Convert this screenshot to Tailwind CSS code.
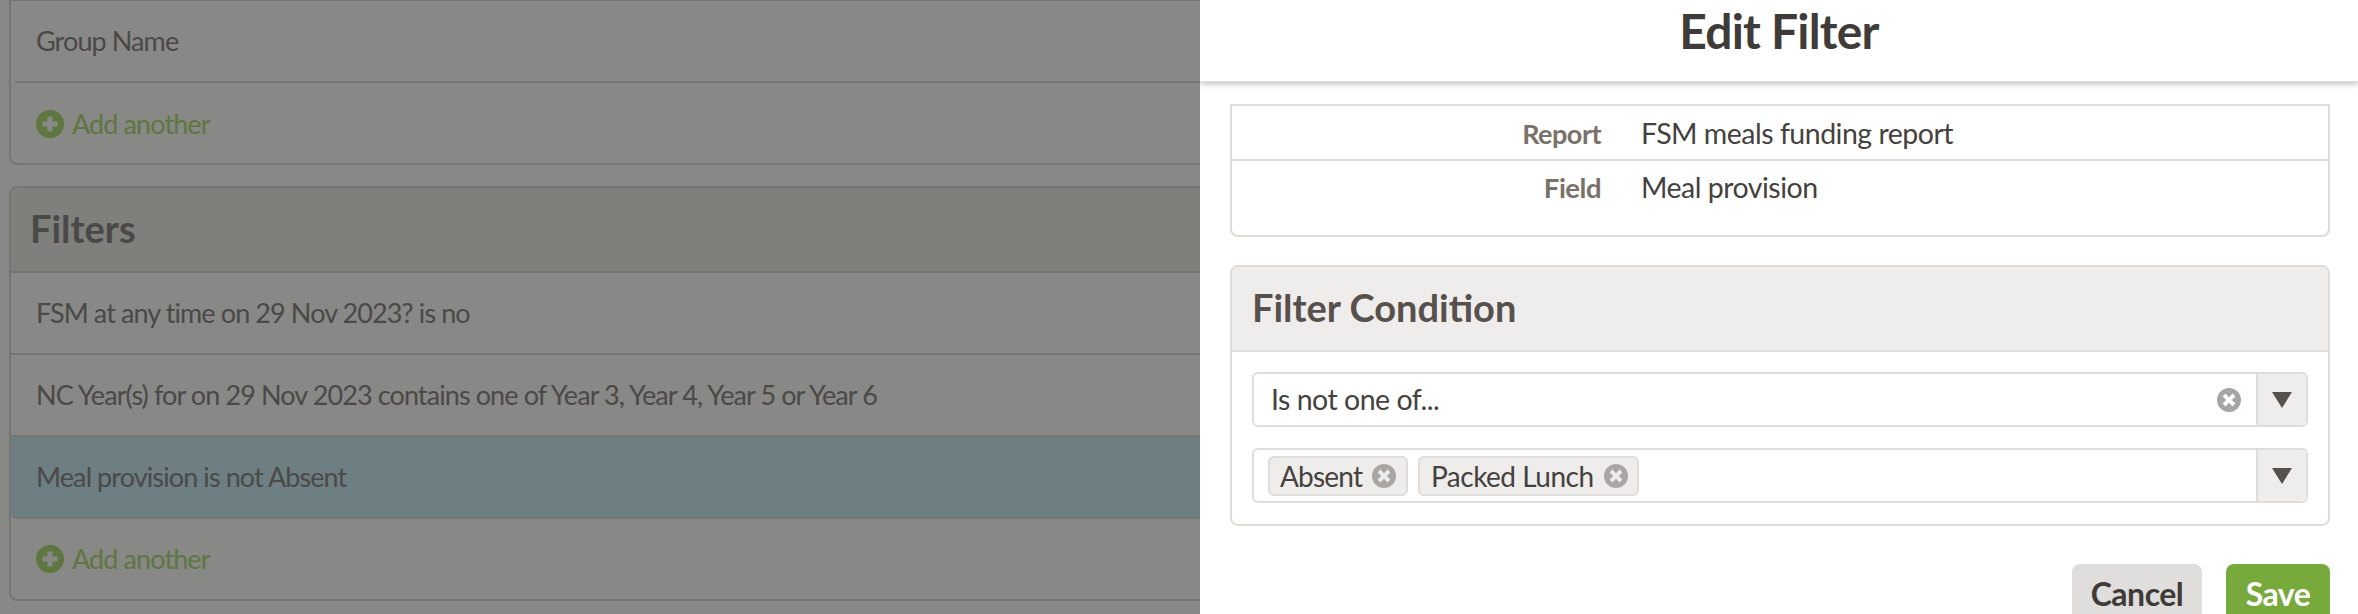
<!doctype html>
<html><head><meta charset="utf-8"><script src="https://cdn.jsdelivr.net/npm/@tailwindcss/browser@4"></script></head>
<body class="m-0 overflow-hidden">
<div class="flex w-[2358px] h-[614px] overflow-hidden font-['Lato',sans-serif] text-[27px] text-[#4b4947] bg-[#888886]">
  <div class="w-[1200px] shrink-0 pl-[9px] overflow-hidden">
    <div class="w-[1300px] tracking-[-0.9px]">
      <section class="h-[166px] border-2 border-[#757573] rounded-b-[8px] bg-[#888886] -mt-px">
        <div class="h-[82px] ml-[4px] border-b-2 border-[#757573] pl-[21px] flex items-center">Group Name</div>
        <div class="h-[82px] pl-[25px] flex items-center gap-[8px] text-[#5e7640]">
          <svg class="w-[28px] h-[28px]" viewBox="0 0 28 28"><path fill="#5e7640" fill-rule="evenodd" d="M14 0a14 14 0 1 0 0 28a14 14 0 1 0 0-28ZM11.5 6.5h5v5h5v5h-5v5h-5v-5h-5v-5h5Z"/></svg>
          Add another</div>
      </section>
      <section class="mt-[21px] h-[415px] border-2 border-[#757573] rounded-[8px] bg-[#888886]">
        <div class="h-[85px] bg-[#7f7f7c] rounded-t-[6px] border-b-2 border-[#757573] pl-[19px] pb-[2px] flex items-center text-[38px] font-bold tracking-[0px]">Filters</div>
        <div class="h-[82px] border-b-2 border-[#757573] pl-[25px] flex items-center">FSM at any time on 29 Nov 2023? is no</div>
        <div class="h-[82px] border-b-2 border-[#757573] pl-[25px] flex items-center">NC Year(s) for on 29 Nov 2023 contains one of Year 3, Year 4, Year 5 or Year 6</div>
        <div class="h-[82px] border-b-2 border-[#757573] bg-[#6d7f83] pl-[25px] flex items-center rounded-bl-[6px]">Meal provision is not Absent</div>
        <div class="h-[80px] pl-[25px] flex items-center gap-[8px] text-[#5e7640]">
          <svg class="w-[28px] h-[28px]" viewBox="0 0 28 28"><path fill="#5e7640" fill-rule="evenodd" d="M14 0a14 14 0 1 0 0 28a14 14 0 1 0 0-28ZM11.5 6.5h5v5h5v5h-5v5h-5v-5h-5v-5h5Z"/></svg>
          Add another</div>
      </section>
    </div>
  </div>
  <aside class="w-[1158px] shrink-0 bg-white text-[#45413e] text-[28.5px] tracking-[-0.5px] overflow-hidden">
    <header class="h-[82px] flex items-start justify-center pt-[2px] text-[48px] leading-[58px] font-bold text-[#3f3b38] shadow-[0_2px_6px_rgba(0,0,0,0.25)] border-b border-[#dddddb] tracking-[-0.8px] relative">Edit Filter</header>
    <div class="pl-[30px] pr-[28px]">
      <div class="mt-[22px] h-[133px] border-2 border-[#dedddb] rounded-b-[8px]">
        <div class="h-[55px] border-b-2 border-[#dedddb] flex pt-[9px]">
          <div class="w-[369px] text-right font-bold text-[#7b716b] text-[27px] leading-[38px]">Report</div>
          <div class="ml-[40px] leading-[36px]">FSM meals funding report</div>
        </div>
        <div class="flex pt-[8px]">
          <div class="w-[369px] text-right font-bold text-[#7b716b] text-[27.5px] leading-[38px]">Field</div>
          <div class="ml-[40px] leading-[36px]">Meal provision</div>
        </div>
      </div>
      <div class="mt-[28px] h-[261px] border-2 border-[#dedddb] rounded-[8px]">
        <div class="h-[85px] bg-[#eeedeb] rounded-t-[6px] border-b-2 border-[#dedddb] pl-[20px] pb-[2px] flex items-center text-[38px] font-bold text-[#57514e] tracking-[0px]">Filter Condition</div>
        <div class="px-[20px] pt-[20px]">
          <div class="h-[55px] border-2 border-[#dedddb] rounded-[6px] flex">
            <div class="flex-1 pl-[17px] flex items-center">Is not one of...</div>
            <svg class="w-[24px] h-[24px] self-center mr-[15px]" viewBox="0 0 24 24"><path fill="#a8a5a2" fill-rule="evenodd" d="M12 0a12 12 0 1 0 0 24a12 12 0 1 0 0-24ZM8.4 5.6L12 9.2L15.6 5.6L18.4 8.4L14.8 12L18.4 15.6L15.6 18.4L12 14.8L8.4 18.4L5.6 15.6L9.2 12L5.6 8.4Z"/></svg>
            <div class="w-[50px] bg-[#eeedeb] border-l-2 border-[#dedddb] rounded-r-[5px] flex items-center justify-center">
              <svg class="w-[20px] h-[16px]" viewBox="0 0 20 16"><path fill="#57514e" d="M0 0h20L10 16Z"/></svg>
            </div>
          </div>
          <div class="mt-[21px] h-[55px] border-2 border-[#dedddb] rounded-[6px] flex">
            <div class="flex-1 pl-[14px] flex items-center gap-[10px] text-[28px]">
              <span class="h-[40px] w-[140px] bg-[#eeedeb] border-2 border-[#dedddb] rounded-[6px] flex items-center pl-[10px] tracking-[-0.8px]">Absent<svg class="w-[24px] h-[24px] ml-auto mr-[10px]" viewBox="0 0 24 24"><path fill="#a8a5a2" fill-rule="evenodd" d="M12 0a12 12 0 1 0 0 24a12 12 0 1 0 0-24ZM8.4 5.6L12 9.2L15.6 5.6L18.4 8.4L14.8 12L18.4 15.6L15.6 18.4L12 14.8L8.4 18.4L5.6 15.6L9.2 12L5.6 8.4Z"/></svg></span>
              <span class="h-[40px] w-[221px] bg-[#eeedeb] border-2 border-[#dedddb] rounded-[6px] flex items-center pl-[11px] tracking-[-0.5px]">Packed Lunch<svg class="w-[24px] h-[24px] ml-auto mr-[9px]" viewBox="0 0 24 24"><path fill="#a8a5a2" fill-rule="evenodd" d="M12 0a12 12 0 1 0 0 24a12 12 0 1 0 0-24ZM8.4 5.6L12 9.2L15.6 5.6L18.4 8.4L14.8 12L18.4 15.6L15.6 18.4L12 14.8L8.4 18.4L5.6 15.6L9.2 12L5.6 8.4Z"/></svg></span>
            </div>
            <div class="w-[50px] bg-[#eeedeb] border-l-2 border-[#dedddb] rounded-r-[5px] flex items-center justify-center">
              <svg class="w-[20px] h-[16px]" viewBox="0 0 20 16"><path fill="#57514e" d="M0 0h20L10 16Z"/></svg>
            </div>
          </div>
        </div>
      </div>
      <div class="mt-[38px] h-[50px] flex justify-end gap-[24px] text-[32px] font-bold leading-[40px]">
        <div class="w-[130px] h-[50px] bg-[#dfdedc] rounded-t-[8px] text-[#3f3b38] text-center pt-[10px] tracking-[-0.5px]">Cancel</div>
        <div class="w-[104px] h-[50px] bg-[#78a93c] rounded-t-[8px] text-white text-center pt-[10px] tracking-[-0.5px]">Save</div>
      </div>
    </div>
  </aside>
</div>
</body></html>
